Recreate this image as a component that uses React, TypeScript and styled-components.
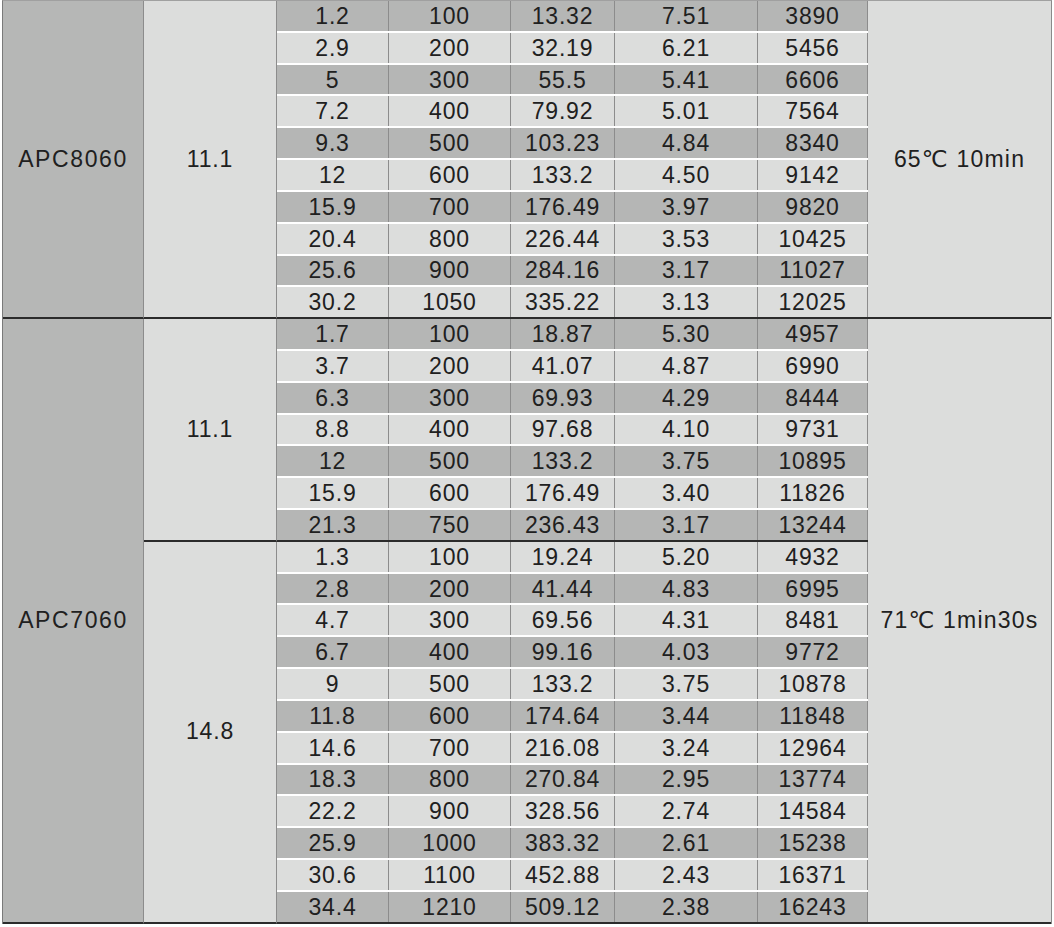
import React from 'react';
import styled, { createGlobalStyle } from 'styled-components';

const GlobalStyle = createGlobalStyle`
    html, body {
        margin: 0;
        padding: 0;
        background: #ffffff;
    }
    body {
        font-family: 'Liberation Sans', Arial, 'DejaVu Sans', sans-serif;
        color: #202020;
    }
`;

const DARK = '#b5b6b5';
const LIGHT = '#dcdddc';
const GRID_LINE = '#8c8c8c';
const GROUP_LINE = '#2b2b2b';
const ROW_HEIGHT = 923 / 29;
const DATA_WIDTHS = [112, 122, 104, 143, 110];

type Subgroup = { voltage: string; rows: string[][] };
type Group = { model: string; condition: string; subgroups: Subgroup[] };

const groups: Group[] = [
    {
        model: 'APC8060',
        condition: '65℃ 10min',
        subgroups: [
            {
                voltage: '11.1',
                rows: [
                    ['1.2', '100', '13.32', '7.51', '3890'],
                    ['2.9', '200', '32.19', '6.21', '5456'],
                    ['5', '300', '55.5', '5.41', '6606'],
                    ['7.2', '400', '79.92', '5.01', '7564'],
                    ['9.3', '500', '103.23', '4.84', '8340'],
                    ['12', '600', '133.2', '4.50', '9142'],
                    ['15.9', '700', '176.49', '3.97', '9820'],
                    ['20.4', '800', '226.44', '3.53', '10425'],
                    ['25.6', '900', '284.16', '3.17', '11027'],
                    ['30.2', '1050', '335.22', '3.13', '12025'],
                ],
            },
        ],
    },
    {
        model: 'APC7060',
        condition: '71℃ 1min30s',
        subgroups: [
            {
                voltage: '11.1',
                rows: [
                    ['1.7', '100', '18.87', '5.30', '4957'],
                    ['3.7', '200', '41.07', '4.87', '6990'],
                    ['6.3', '300', '69.93', '4.29', '8444'],
                    ['8.8', '400', '97.68', '4.10', '9731'],
                    ['12', '500', '133.2', '3.75', '10895'],
                    ['15.9', '600', '176.49', '3.40', '11826'],
                    ['21.3', '750', '236.43', '3.17', '13244'],
                ],
            },
            {
                voltage: '14.8',
                rows: [
                    ['1.3', '100', '19.24', '5.20', '4932'],
                    ['2.8', '200', '41.44', '4.83', '6995'],
                    ['4.7', '300', '69.56', '4.31', '8481'],
                    ['6.7', '400', '99.16', '4.03', '9772'],
                    ['9', '500', '133.2', '3.75', '10878'],
                    ['11.8', '600', '174.64', '3.44', '11848'],
                    ['14.6', '700', '216.08', '3.24', '12964'],
                    ['18.3', '800', '270.84', '2.95', '13774'],
                    ['22.2', '900', '328.56', '2.74', '14584'],
                    ['25.9', '1000', '383.32', '2.61', '15238'],
                    ['30.6', '1100', '452.88', '2.43', '16371'],
                    ['34.4', '1210', '509.12', '2.38', '16243'],
                ],
            },
        ],
    },
];

const Page = styled.div`
    padding-left: 2px;
`;

const Sheet = styled.div`
    display: flex;
    flex-direction: column;
    width: 1050px;
    box-sizing: border-box;
    border-left: 1px solid #7a7a7a;
    border-top: 1px solid #a0a0a0;
    border-right: 1px solid #8a8a8a;
`;

const GroupBlock = styled.div`
    display: flex;
    align-items: stretch;
`;

const Label = styled.div`
    display: flex;
    align-items: center;
    justify-content: center;
    box-sizing: border-box;
    font-size: 23px;
    letter-spacing: 0.8px;
    white-space: nowrap;
`;

const ModelCell = styled(Label)`
    width: 141px;
    flex-shrink: 0;
    background: #b6b7b6;
    border-right: 1px solid ${GRID_LINE};
    border-bottom: 2px solid ${GROUP_LINE};
    letter-spacing: 1.6px;
`;

const ConditionCell = styled(Label)`
    flex: 1;
    background: ${LIGHT};
    border-bottom: 2px solid ${GROUP_LINE};
    letter-spacing: 1.2px;
`;

const SubgroupStack = styled.div`
    display: flex;
    flex-direction: column;
    flex-shrink: 0;
`;

const SubgroupBlock = styled.div`
    display: flex;
    align-items: stretch;
`;

const VoltageCell = styled(Label)`
    width: 133px;
    flex-shrink: 0;
    background: ${LIGHT};
    border-right: 1px solid ${GRID_LINE};
    border-bottom: 2px solid ${GROUP_LINE};
`;

const RowList = styled.div`
    display: flex;
    flex-direction: column;
`;

const DataRow = styled.div<{ $dark: boolean; $closing: boolean }>`
    display: flex;
    height: ${ROW_HEIGHT}px;
    box-sizing: border-box;
    background: ${p => (p.$dark ? DARK : LIGHT)};
    border-bottom: 2px solid ${p => (p.$closing ? GROUP_LINE : '#ffffff')};
`;

const DataCell = styled(Label)<{ $w: number }>`
    width: ${p => p.$w}px;
    padding-top: 1px;
    border-right: 1px solid ${GRID_LINE};
`;

export default function App() {
    let index = 0;

    return (
        <Page>
            <GlobalStyle />
            <Sheet>
                {groups.map(group => (
                    <GroupBlock key={group.model}>
                        <ModelCell>{group.model}</ModelCell>
                        <SubgroupStack>
                            {group.subgroups.map(sub => (
                                <SubgroupBlock key={sub.voltage}>
                                    <VoltageCell>{sub.voltage}</VoltageCell>
                                    <RowList>
                                        {sub.rows.map((values, ri) => {
                                            const dark = index % 2 === 0;
                                            index += 1;
                                            return (
                                                <DataRow
                                                    key={ri}
                                                    $dark={dark}
                                                    $closing={ri === sub.rows.length - 1}
                                                >
                                                    {values.map((v, ci) => (
                                                        <DataCell key={ci} $w={DATA_WIDTHS[ci]}>
                                                            {v}
                                                        </DataCell>
                                                    ))}
                                                </DataRow>
                                            );
                                        })}
                                    </RowList>
                                </SubgroupBlock>
                            ))}
                        </SubgroupStack>
                        <ConditionCell>{group.condition}</ConditionCell>
                    </GroupBlock>
                ))}
            </Sheet>
        </Page>
    );
}
